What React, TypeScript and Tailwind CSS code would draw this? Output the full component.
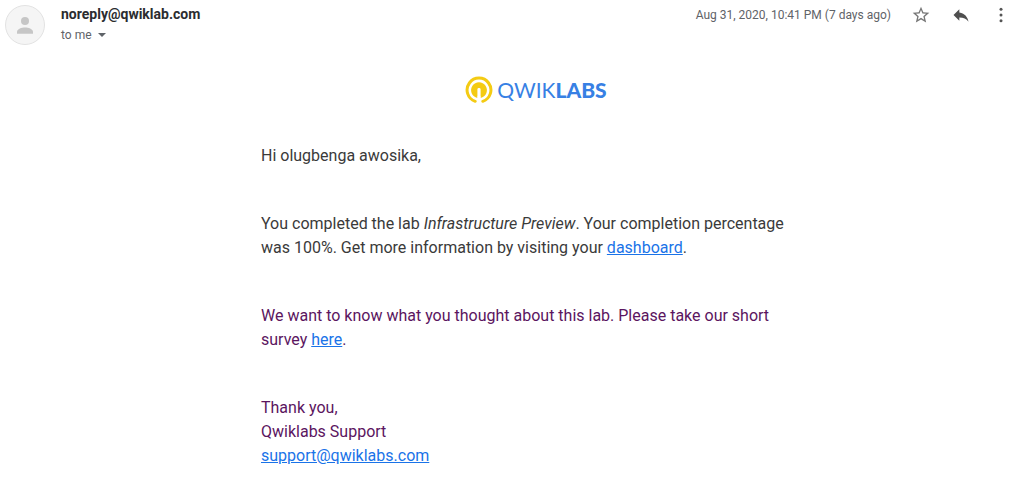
import React from "react";

function Avatar() {
  return (
    <svg viewBox="0 0 40 40" className="size-10 shrink-0" role="img" aria-label="Sender">
      <circle cx="20" cy="20" r="19.5" fill="#f5f5f5" stroke="#e2e2e2" />
      <circle cx="20" cy="16" r="4" fill="#c6c6c6" />
      <path d="M12 28.7v-1.9c0-2.9 4.8-4.3 8-4.3s8 1.400 8 4.300v1.900z" fill="#c6c6c6" />
    </svg>
  );
}

function LogoMark() {
  return (
    <svg viewBox="0 0 28 28" className="size-7" aria-hidden="true">
      <path
        d="M10.200 25.300A11.900 11.900 0 1 1 17.800 25.300"
        fill="none"
        stroke="#f4cb13"
        strokeWidth="3"
        strokeLinecap="round"
      />
      <path
        d="M12.400 21.900A7.900 7.900 0 1 1 15.600 21.900V13.200Q15.600 12 14 12T12.400 13.200z"
        fill="#f4cb13"
      />
      <path d="M13 21.500V13.300q0-.800 1-.800t1 .800v8.200z" fill="#fff" />
      <path d="M12.600 20h2.800v7h-2.800z" fill="#fff" />
    </svg>
  );
}

function IconButton({ label, children }: { label: string; children: React.ReactNode }) {
  return (
    <button type="button" aria-label={label} className="flex size-5 items-center justify-center">
      {children}
    </button>
  );
}

function MessageHeader() {
  return (
    <header className="flex items-start justify-between pt-[5px] pr-2.5 pl-[5px]">
      <div className="flex gap-4">
        <Avatar />
        <div className="text-xs text-[#5f6368]">
          <h1 className="text-sm leading-[18px] font-bold text-[#2b2c2f]">noreply@qwiklab.com</h1>
          <button type="button" className="flex h-6 items-center gap-1.5">
            to me
            <svg viewBox="0 0 8 4" className="h-1 w-2" aria-hidden="true">
              <path d="M0 0h8L4 4z" fill="#5f6368" />
            </svg>
          </button>
        </div>
      </div>
      <div className="flex items-center gap-5">
        <time dateTime="2020-08-31T22:41" className="text-xs text-[#5f6368]">
          Aug 31, 2020, 10:41 PM (7 days ago)
        </time>
        <IconButton label="Star">
          <svg viewBox="0 0 24 24" className="size-5" fill="#777">
            <path d="M22 9.240l-7.190-.620L12 2 9.190 8.630 2 9.240l5.460 4.730L5.820 21 12 17.270 18.180 21l-1.630-7.030L22 9.240zM12 15.400l-3.760 2.270 1-4.280-3.320-2.880 4.380-.380L12 6.100l1.710 4.040 4.380.380-3.320 2.880 1 4.280L12 15.400z" />
          </svg>
        </IconButton>
        <IconButton label="Reply">
          <svg viewBox="0 0 24 24" className="size-5" fill="#4f4f4f">
            <path d="M10 9V5l-7 7 7 7v-4.100c5 0 8.500 1.600 11 5.100-1-5-4-10-11-11z" />
          </svg>
        </IconButton>
        <IconButton label="More">
          <svg viewBox="0 0 24 24" className="size-5" fill="#555">
            <circle cx="12" cy="5" r="1.800" />
            <circle cx="12" cy="12" r="1.800" />
            <circle cx="12" cy="19" r="1.800" />
          </svg>
        </IconButton>
      </div>
    </header>
  );
}

function MailLink({ href, children }: { href: string; children: React.ReactNode }) {
  return (
    <a href={href} className="text-[#1a73e8] underline">
      {children}
    </a>
  );
}

export default function App() {
  return (
    <article className="bg-white font-['Roboto','Liberation_Sans',sans-serif]">
      <MessageHeader />
      <main className="pt-[29px] pr-2.5 pb-4 pl-[61px]">
        <div className="mx-auto max-w-[550px]">
          <div className="flex items-center justify-center gap-1 pb-10">
            <LogoMark />
            <div className="font-['Lato',sans-serif] text-[21px] leading-7 text-[#3780e4]">
              <span>QWIK</span>
              <span className="font-black">LABS</span>
            </div>
          </div>
          <div className="flex flex-col gap-11 text-base text-[#3a3a3a]">
            <p>Hi olugbenga awosika,</p>
            <p>
              You completed the lab <em>Infrastructure Preview</em>. Your completion percentage was 100%. Get more
              information by visiting your <MailLink href="#dashboard">dashboard</MailLink>.
            </p>
            <p className="text-[#5b1560]">
              We want to know what you thought about this lab. Please take our short survey{" "}
              <MailLink href="#survey">here</MailLink>.
            </p>
            <p className="text-[#5b1560]">
              Thank you,
              <br />
              Qwiklabs Support
              <br />
              <MailLink href="mailto:support@qwiklabs.com">support@qwiklabs.com</MailLink>
            </p>
          </div>
        </div>
      </main>
    </article>
  );
}
